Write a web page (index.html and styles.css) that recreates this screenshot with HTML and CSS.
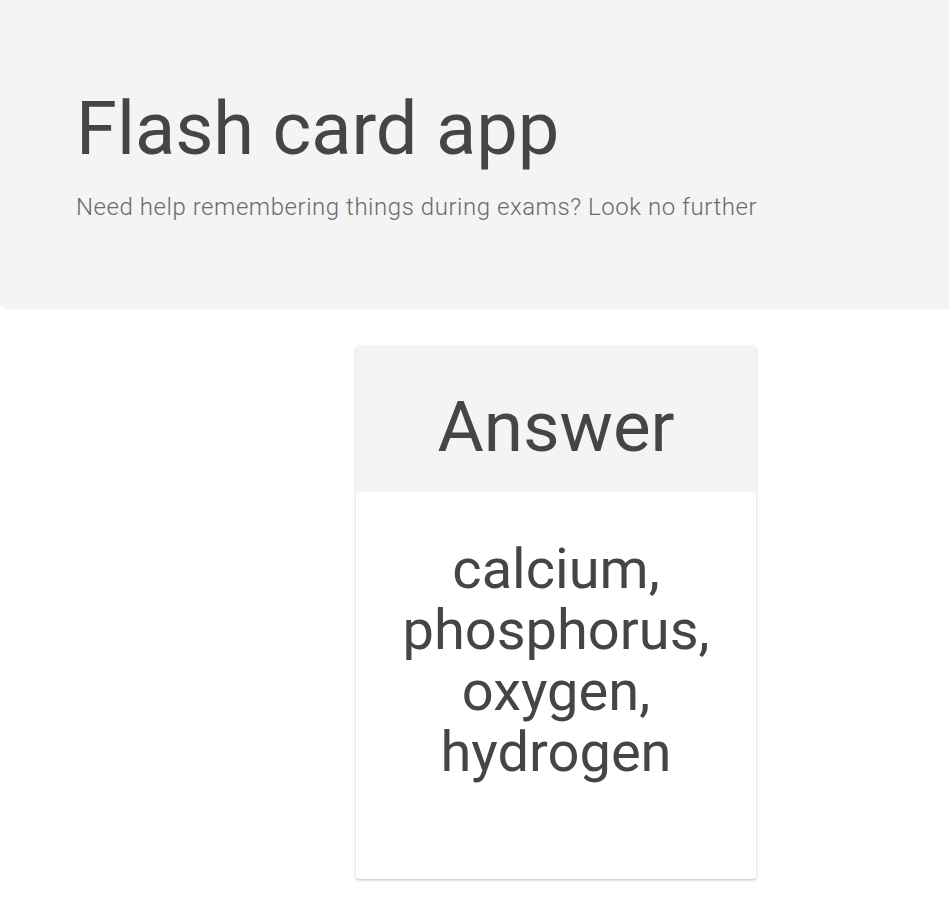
FILE: index.html
```html
<!DOCTYPE html>
<html lang="en">
<head>
<meta charset="utf-8">
<title>Flash card app</title>
<link rel="stylesheet" href="styles.css">
</head>
<body>
  <header class="jumbotron">
    <h1 class="title">Flash card app</h1>
    <p class="lead">Need help remembering things during exams? Look no further</p>
  </header>
  <main class="main">
    <div class="card">
      <div class="card-header">
        <h2 class="card-title">Answer</h2>
      </div>
      <div class="card-body">
        <p class="card-text">calcium, phosphorus, oxygen, hydrogen</p>
      </div>
    </div>
  </main>
</body>
</html>
```
FILE: styles.css
```css
* { box-sizing: border-box; }
html, body { margin: 0; padding: 0; }
body {
  font-family: Roboto, "Liberation Sans", sans-serif;
  color: #454545;
  background: #fff;
  overflow-x: hidden;
}
.jumbotron {
  background: #f4f4f4;
  height: 309px;
  padding: 85px 0 0 76px;
  border-radius: 0 0 0 6px;
}
.title {
  margin: 0;
  font-size: 74px;
  font-weight: 400;
  line-height: 1.2;
  color: #454545;
}
.lead {
  margin: 15px 0 0 0;
  font-size: 24px;
  font-weight: 300;
  line-height: 1.5;
  letter-spacing: 0.55px;
  color: #6a6a6a;
}
.main {
  padding: 37px 0 20px 356px;
}
.card {
  width: 400px;
  border-radius: 3px;
  background: #fff;
  box-shadow: 0 1px 3px rgba(0,0,0,0.18), 0 1px 2px rgba(0,0,0,0.08);
  overflow: hidden;
}
.card-header {
  background: #f4f4f4;
  height: 146px;
  padding-top: 38px;
  text-align: center;
}
.card-title {
  margin: 0;
  font-size: 71px;
  font-weight: 400;
  line-height: 1.2;
  color: #454545;
}
.card-body {
  height: 387px;
  padding: 47px 10px 0;
  text-align: center;
}
.card-text {
  margin: 0;
  font-size: 56px;
  line-height: 61px;
  color: #454545;
}
```
